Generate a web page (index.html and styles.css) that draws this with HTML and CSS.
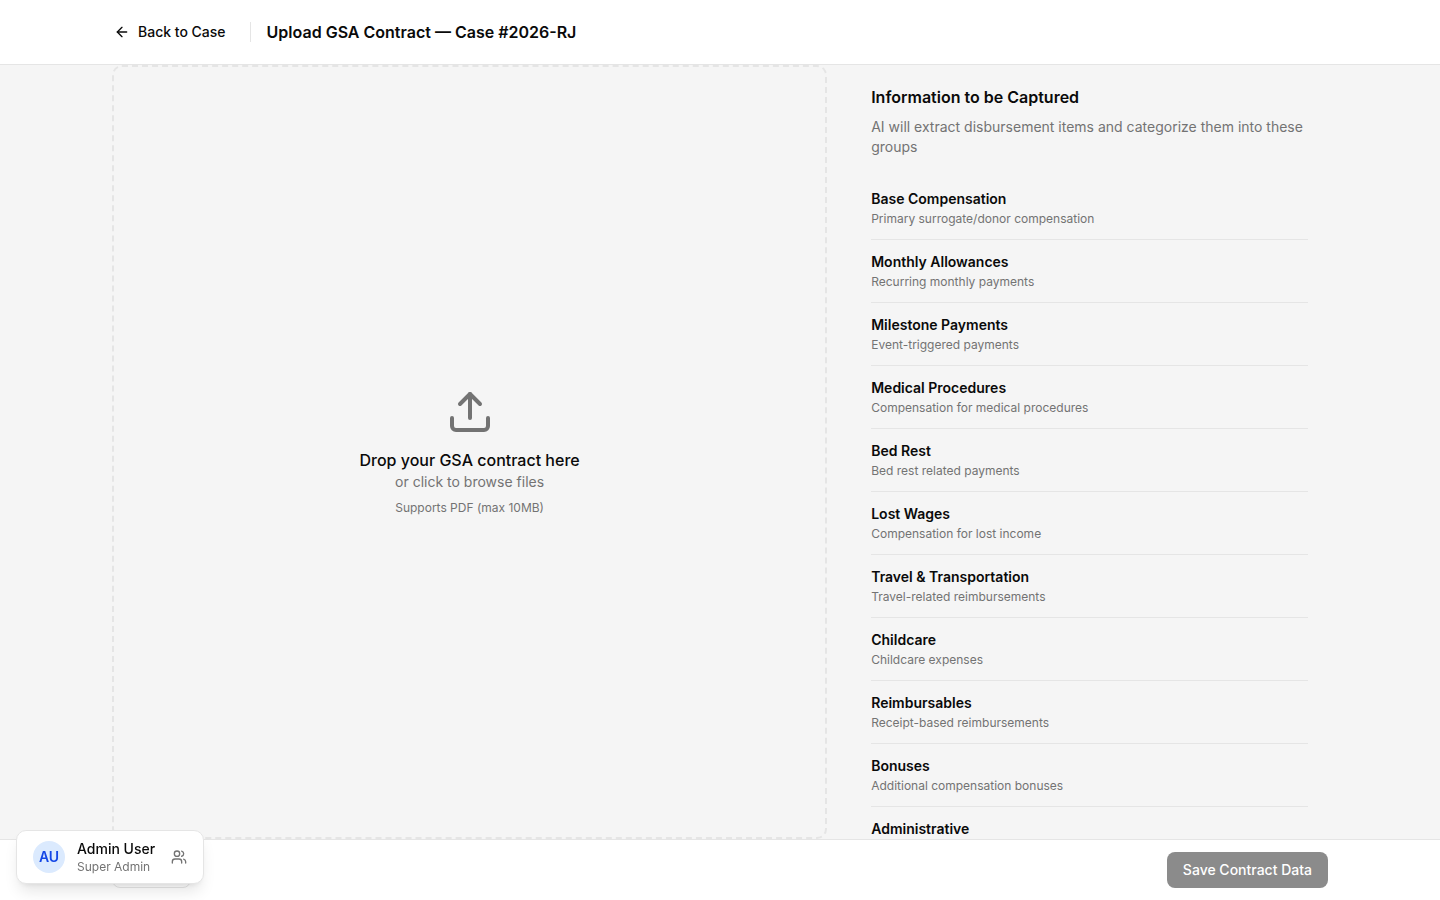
FILE: index.html
```html
<!DOCTYPE html>
<html lang="en">
<head>
<meta charset="utf-8">
<meta name="viewport" content="width=device-width, initial-scale=1">
<title>Upload GSA Contract</title>
<link rel="stylesheet" href="styles.css">
</head>
<body>
<div class="page">
  <header class="header">
    <div class="container header-row">
      <a class="back" href="#">
        <svg class="icon" viewBox="0 0 24 24" aria-hidden="true"><path d="m12 19-7-7 7-7"/><path d="M19 12H5"/></svg>
        Back to Case
      </a>
      <span class="divider"></span>
      <h1 class="title">Upload GSA Contract — Case #2026-RJ</h1>
    </div>
  </header>

  <main class="main">
    <div class="container columns">
      <button class="dropzone" type="button">
        <svg class="icon icon-upload" viewBox="0 0 24 24" aria-hidden="true"><path d="M12 3v12"/><path d="m17 8-5-5-5 5"/><path d="M21 15v4a2 2 0 0 1-2 2H5a2 2 0 0 1-2-2v-4"/></svg>
        <span class="drop-title">Drop your GSA contract here</span>
        <span class="drop-text">or click to browse files</span>
        <span class="drop-hint">Supports PDF (max 10MB)</span>
      </button>

      <section class="info">
        <h2 class="title">Information to be Captured</h2>
        <p class="info-text">AI will extract disbursement items and categorize them into these groups</p>
        <ul class="groups">
          <li class="group"><h3 class="group-name">Base Compensation</h3><p class="group-text">Primary surrogate/donor compensation</p></li>
          <li class="group"><h3 class="group-name">Monthly Allowances</h3><p class="group-text">Recurring monthly payments</p></li>
          <li class="group"><h3 class="group-name">Milestone Payments</h3><p class="group-text">Event-triggered payments</p></li>
          <li class="group"><h3 class="group-name">Medical Procedures</h3><p class="group-text">Compensation for medical procedures</p></li>
          <li class="group"><h3 class="group-name">Bed Rest</h3><p class="group-text">Bed rest related payments</p></li>
          <li class="group"><h3 class="group-name">Lost Wages</h3><p class="group-text">Compensation for lost income</p></li>
          <li class="group"><h3 class="group-name">Travel &amp; Transportation</h3><p class="group-text">Travel-related reimbursements</p></li>
          <li class="group"><h3 class="group-name">Childcare</h3><p class="group-text">Childcare expenses</p></li>
          <li class="group"><h3 class="group-name">Reimbursables</h3><p class="group-text">Receipt-based reimbursements</p></li>
          <li class="group"><h3 class="group-name">Bonuses</h3><p class="group-text">Additional compensation bonuses</p></li>
          <li class="group"><h3 class="group-name">Administrative</h3></li>
        </ul>
      </section>
    </div>
  </main>

  <footer class="footer">
    <div class="container footer-row">
      <button class="button button-outline" type="button" aria-label="Cancel"></button>
      <button class="button button-primary" type="button" disabled>Save Contract Data</button>
    </div>
  </footer>
</div>

<button class="user-card" type="button">
  <span class="avatar">AU</span>
  <span class="user-info">
    <span class="user-name">Admin User</span>
    <span class="user-role">Super Admin</span>
  </span>
  <svg class="icon icon-users" viewBox="0 0 24 24" aria-hidden="true"><path d="M16 21v-2a4 4 0 0 0-4-4H6a4 4 0 0 0-4 4v2"/><circle cx="9" cy="7" r="4"/><path d="M22 21v-2a4 4 0 0 0-3-3.87"/><path d="M16 3.13a4 4 0 0 1 0 7.75"/></svg>
</button>
</body>
</html>
```
FILE: styles.css
```css
* {
  box-sizing: border-box;
  margin: 0;
  padding: 0;
}

body {
  font-family: Inter, "Liberation Sans", sans-serif;
  font-size: 14px;
  line-height: 20px;
  color: #0a0a0a;
  background: #fff;
}

button {
  font: inherit;
  color: inherit;
  cursor: pointer;
}

.page {
  display: flex;
  flex-direction: column;
  height: 100vh;
}

.container {
  width: 100%;
  max-width: 1280px;
  margin: 0 auto;
  padding: 0 32px;
}

.icon {
  width: 16px;
  height: 16px;
  flex: none;
  fill: none;
  stroke: currentColor;
  stroke-width: 2;
  stroke-linecap: round;
  stroke-linejoin: round;
}

.header {
  border-bottom: 1px solid #e5e5e5;
}

.header-row {
  display: flex;
  align-items: center;
  gap: 16px;
  height: 64px;
}

.back {
  display: flex;
  align-items: center;
  gap: 8px;
  padding: 8px 8px 8px 2px;
  font-weight: 500;
  color: inherit;
  text-decoration: none;
}

.divider {
  width: 1px;
  height: 20px;
  background: #e5e5e5;
}

.title {
  font-size: 16px;
  line-height: 24px;
  font-weight: 600;
}

.main {
  flex: 1;
  min-height: 0;
  overflow: hidden;
  background: #f5f5f5;
}

.columns {
  display: grid;
  grid-template-columns: 3fr 2fr;
  grid-template-rows: minmax(0, 1fr);
  gap: 24px;
  height: 100%;
}

.dropzone {
  display: flex;
  flex-direction: column;
  align-items: center;
  justify-content: center;
  border: 2px dashed #e5e5e5;
  border-radius: 10px;
  background: transparent;
}

.icon-upload {
  width: 48px;
  height: 48px;
  margin-bottom: 12px;
  color: #737373;
}

.drop-title {
  font-size: 16px;
  line-height: 24px;
  font-weight: 500;
}

.drop-text {
  color: #737373;
}

.drop-hint {
  margin-top: 8px;
  font-size: 12px;
  line-height: 16px;
  color: #737373;
}

.info {
  padding: 20px;
}

.info-text {
  margin: 8px 0 20px;
  color: #737373;
}

.groups {
  list-style: none;
}

.group {
  padding: 12px 0;
  border-bottom: 1px solid #e5e5e5;
}

.group-name {
  font-size: 14px;
  font-weight: 600;
}

.group-text {
  margin-top: 2px;
  font-size: 12px;
  line-height: 16px;
  color: #737373;
}

.footer {
  border-top: 1px solid #e5e5e5;
}

.footer-row {
  display: flex;
  align-items: center;
  justify-content: space-between;
  padding-top: 12px;
  padding-bottom: 12px;
}

.button {
  height: 36px;
  padding: 0 16px;
  border: 0;
  border-radius: 8px;
  font-weight: 500;
}

.button-outline {
  width: 79px;
  border: 1px solid #e5e5e5;
  background: #fff;
}

.button-primary {
  color: #fff;
  background: #8b8b8b;
}

.user-card {
  position: fixed;
  left: 16px;
  bottom: 16px;
  display: flex;
  align-items: center;
  padding: 8px 16px;
  border: 1px solid #e5e5e5;
  border-radius: 10px;
  background: #fff;
  box-shadow: 0 10px 15px -3px rgba(0, 0, 0, 0.1), 0 4px 6px -4px rgba(0, 0, 0, 0.1);
  text-align: left;
}

.avatar {
  display: flex;
  align-items: center;
  justify-content: center;
  width: 32px;
  height: 32px;
  margin-right: 12px;
  border-radius: 50%;
  font-weight: 600;
  color: #1447e6;
  background: #dbeafe;
}

.user-info {
  display: flex;
  flex-direction: column;
  margin-right: 16px;
}

.user-name {
  font-weight: 500;
}

.user-role {
  font-size: 12px;
  line-height: 16px;
  color: #737373;
}

.icon-users {
  color: #737373;
}
```
